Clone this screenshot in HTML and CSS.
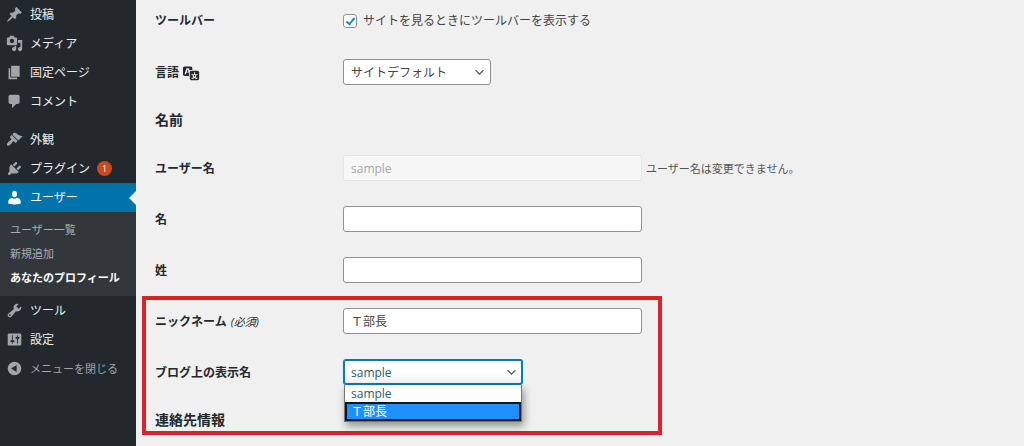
FILE: index.html
```html
<!DOCTYPE html>
<html lang="ja">
<head>
  <meta charset="UTF-8">
  <meta name="viewport" content="width=device-width, initial-scale=1.0">
  <title>プロフィール</title>
  <link rel="stylesheet" href="styles.css">
</head>
<body>

  <!-- Admin menu -->
  <nav class="admin-menu">
    <ul class="menu">
      <li><a class="menu-item" href="#">
        <svg class="icon" viewBox="0 0 20 20"><path d="M10.44 3.02l1.82-1.82 6.36 6.35-1.83 1.82c-1.05-.68-2.48-.57-3.41.36l-.75.75c-.92.93-1.04 2.35-.35 3.41l-1.83 1.82-2.41-2.41-2.8 2.79c-.42.42-3.38 2.71-3.8 2.29s1.86-3.39 2.28-3.81l2.79-2.79L4.1 9.36l1.83-1.82c1.05.69 2.48.57 3.4-.36l.75-.75c.93-.92 1.05-2.35.36-3.41z"/></svg>
        投稿</a></li>
      <li><a class="menu-item" href="#">
        <svg class="icon" viewBox="0 0 20 20"><path d="M13 11V4c0-.55-.45-1-1-1h-1.67L9 1H5L3.67 3H2c-.55 0-1 .45-1 1v7c0 .55.45 1 1 1h10c.55 0 1-.45 1-1zM7 4.5c1.38 0 2.5 1.12 2.5 2.5S8.38 9.5 7 9.5 4.5 8.38 4.5 7 5.62 4.5 7 4.5zM14 6h5v10.5c0 1.38-1.12 2.5-2.5 2.5S14 17.88 14 16.5s1.12-2.5 2.5-2.5c.17 0 .34.02.5.05V9h-3V6zm-4 8.05V13h2v3.5c0 1.38-1.12 2.5-2.5 2.5S7 17.88 7 16.5 8.12 14 9.5 14c.17 0 .34.02.5.05z"/></svg>
        メディア</a></li>
      <li><a class="menu-item" href="#">
        <svg class="icon" viewBox="0 0 20 20"><path d="M6 15V2h10v13H6zm-1 1h8v2H3V5h2v11z"/></svg>
        固定ページ</a></li>
      <li><a class="menu-item" href="#">
        <svg class="icon" viewBox="0 0 20 20"><path d="M5 2h9c1.1 0 2 .9 2 2v7c0 1.1-.9 2-2 2h-2l-5 5v-5H5c-1.1 0-2-.9-2-2V4c0-1.1.9-2 2-2z"/></svg>
        コメント</a></li>
      <li class="separator"></li>
      <li><a class="menu-item" href="#">
        <svg class="icon" viewBox="0 0 20 20"><path d="M14.48 11.06L7.41 3.99l1.5-1.5c.5-.56 2.3-.47 3.51.32 1.21.8 1.43 1.28 2.91 2.1 1.18.64 2.45 1.26 4.45.85zm-.71.71L6.7 4.7 4.93 6.47c-.39.39-.39 1.02 0 1.41l1.06 1.06c.39.39.39 1.03 0 1.42-.6.6-1.43 1.11-2.21 1.69-.35.26-.7.53-1.01.84C1.43 14.23.4 16.08 1.4 17.07c.99 1 2.84-.03 4.18-1.36.31-.31.58-.66.85-1.02.57-.78 1.08-1.61 1.69-2.21.39-.39 1.02-.39 1.41 0l1.06 1.06c.39.39 1.02.39 1.41 0z"/></svg>
        外観</a></li>
      <li><a class="menu-item" href="#">
        <svg class="icon" viewBox="0 0 20 20"><path d="M13.11 4.36L9.87 7.6 8 5.73l3.24-3.24c.35-.34 1.05-.2 1.56.32.52.51.66 1.21.31 1.55zm-8 1.77l.91-1.12 9.01 9.01-1.19.84c-.71.71-2.63 1.16-3.82 1.16H6.14L4.9 17.26c-.59.59-1.54.59-2.12 0-.59-.58-.59-1.53 0-2.12l1.24-1.24v-3.88c0-1.13.4-3.19 1.09-3.89zm7.26 3.97l3.24-3.24c.34-.35 1.04-.21 1.55.31.52.51.66 1.21.31 1.55l-3.24 3.25z"/></svg>
        プラグイン <span class="badge">1</span></a></li>
      <li>
        <a class="menu-item current" href="#">
          <svg class="icon" viewBox="0 0 20 20"><path d="M10 9.7c-2.3 0-3-2.1-3-3.9C7 3.700 8 2 10 2s3 1.700 3 3.800c0 1.800-.7 3.900-3 3.900zM7 10.300c.8.700 1.800 1.100 3 1.100s2.200-.4 3-1.100c2.500.2 4.300 2.200 4.300 4.400V17s-3.700 1.100-7.300 1.100S2.700 17 2.700 17v-2.300c0-2.200 1.800-4.200 4.300-4.400z"/></svg>
          ユーザー</a>
        <ul class="submenu">
          <li><a href="#">ユーザー一覧</a></li>
          <li><a href="#">新規追加</a></li>
          <li><a class="active" href="#">あなたのプロフィール</a></li>
        </ul>
      </li>
      <li><a class="menu-item" href="#">
        <svg class="icon" viewBox="0 0 20 20"><path d="M16.68 9.77c-1.34 1.34-3.3 1.67-4.95.99l-5.41 6.52c-.99.99-2.59.99-3.58 0s-.99-2.59 0-3.57l6.52-5.42c-.68-1.65-.35-3.61.99-4.95 1.28-1.28 3.12-1.62 4.72-1.06l-2.89 2.89 2.82 2.82 2.86-2.87c.53 1.58.18 3.39-1.08 4.65zM3.81 16.21c.4.39 1.04.39 1.43 0 .4-.4.4-1.04 0-1.43-.39-.4-1.03-.4-1.43 0-.39.39-.39 1.03 0 1.43z"/></svg>
        ツール</a></li>
      <li><a class="menu-item" href="#">
        <svg class="icon" viewBox="0 0 20 20"><path d="M18 16V4c0-.55-.45-1-1-1H3c-.55 0-1 .45-1 1v12c0 .55.45 1 1 1h14c.55 0 1-.45 1-1zM8 11h1c.55 0 1 .45 1 1s-.45 1-1 1H8v1.5c0 .28-.22.5-.5.5s-.5-.22-.5-.5V13H6c-.55 0-1-.45-1-1s.45-1 1-1h1V5.5c0-.28.22-.5.5-.5s.5.22.5.5V11zm5-2h-1c-.55 0-1-.45-1-1s.45-1 1-1h1V5.5c0-.28.22-.5.5-.5s.5.22.5.5V7h1c.55 0 1 .45 1 1s-.45 1-1 1h-1v5.5c0 .28-.22.5-.5.5s-.5-.22-.5-.5V9z"/></svg>
        設定</a></li>
      <li><button class="menu-item collapse" type="button">
        <svg class="icon" viewBox="0 0 20 20"><path fill-rule="evenodd" d="M10 2a8 8 0 1 1 0 16 8 8 0 0 1 0-16zm2.5 4L6 10l6.5 4z"/></svg>
        メニューを閉じる</button></li>
    </ul>
  </nav>

  <!-- Profile form -->
  <main class="content">
    <form class="profile-form">
      <div class="row">
        <span class="label">ツールバー</span>
        <div class="field">
          <input type="checkbox" id="toolbar" checked>
          <label for="toolbar">サイトを見るときにツールバーを表示する</label>
        </div>
      </div>
      <div class="row">
        <label class="label" for="locale">言語
          <svg class="icon" viewBox="0 0 20 20"><path d="M11 7H9.49c-.63 0-1.25.3-1.59.7L7 5H4.13l-2.39 7h1.69l.74-2H7v4H2c-1.1 0-2-.9-2-2V5c0-1.1.9-2 2-2h7c1.1 0 2 .9 2 2v2zM6.51 9H4.49l1-2.93zM10 8h7c1.1 0 2 .9 2 2v7c0 1.1-.9 2-2 2h-7c-1.1 0-2-.9-2-2v-7c0-1.1.9-2 2-2zm7.25 5v-1.08h-3.17V9.75h-1.16v2.17H9.75V13h1.28c.11.85.56 1.85 1.28 2.62-.87.36-1.89.62-2.31.62-.01.02.22.97.2 1.46.84 0 2.21-.5 3.28-1.15 1.09.65 2.48 1.15 3.34 1.15-.02-.49.2-1.44.2-1.46-.43 0-1.49-.27-2.38-.63.7-.77 1.14-1.77 1.25-2.61h1.36zm-3.81 1.93c-.5-.46-.85-1.13-1.01-1.93h2.09c-.17.8-.51 1.47-1 1.93l-.04.03s-.03-.02-.04-.03z"/></svg>
        </label>
        <div class="field">
          <div class="select-wrap">
            <select id="locale"><option>サイトデフォルト</option></select>
            <svg class="arrow" viewBox="0 0 20 20"><path d="M5 6l5 5 5-5 2 1-7 7-7-7z"/></svg>
          </div>
        </div>
      </div>

      <h2>名前</h2>

      <div class="row">
        <label class="label" for="username">ユーザー名</label>
        <div class="field">
          <input type="text" id="username" value="sample" disabled>
          <span class="description">ユーザー名は変更できません。</span>
        </div>
      </div>
      <div class="row">
        <label class="label" for="firstName">名</label>
        <div class="field"><input type="text" id="firstName"></div>
      </div>
      <div class="row">
        <label class="label" for="lastName">姓</label>
        <div class="field"><input type="text" id="lastName"></div>
      </div>

      <div class="highlighted">
        <div class="row">
          <label class="label" for="nickname">ニックネーム <span class="required">(必須)</span></label>
          <div class="field"><input type="text" id="nickname" value="Ｔ部長"></div>
        </div>
        <div class="row">
          <label class="label" for="displayName">ブログ上の表示名</label>
          <div class="field">
            <div class="select-wrap wide">
              <select id="displayName" class="focused">
                <option>sample</option>
                <option>Ｔ部長</option>
              </select>
              <svg class="arrow" viewBox="0 0 20 20"><path d="M5 6l5 5 5-5 2 1-7 7-7-7z"/></svg>
              <ul class="options" role="listbox" aria-label="ブログ上の表示名">
                <li role="option" aria-selected="false">sample</li>
                <li role="option" aria-selected="true" class="selected">Ｔ部長</li>
              </ul>
            </div>
          </div>
        </div>
        <h2>連絡先情報</h2>
      </div>
    </form>
  </main>

</body>
</html>
```
FILE: styles.css
```css
*,
*::before,
*::after {
  box-sizing: border-box;
}

body {
  display: flex;
  min-height: 100vh;
  margin: 0;
  background: #f0f0f0;
  color: #444;
  font-family: "Open Sans", "Noto Sans CJK JP", sans-serif;
  font-size: 12px;
  line-height: 17px;
}

ul {
  margin: 0;
  padding: 0;
  list-style: none;
}

/* Admin menu */
.admin-menu {
  flex: 0 0 136px;
  background: #23282d;
}

.menu-item {
  position: relative;
  display: flex;
  align-items: center;
  gap: 7px;
  width: 100%;
  height: 29px;
  padding: 0 6px;
  border: none;
  background: none;
  color: #eee;
  font: inherit;
  text-decoration: none;
}

.icon {
  flex: none;
  width: 17px;
  height: 17px;
  fill: currentColor;
}

.menu-item .icon {
  fill: #a0a5aa;
}

.separator {
  height: 9px;
}

.badge {
  width: 15px;
  height: 15px;
  border-radius: 50%;
  background: #ca4a1f;
  color: #fff;
  font-size: 9px;
  line-height: 15px;
  text-align: center;
}

.menu-item.current {
  background: #0073aa;
  color: #fff;
}

.menu-item.current .icon {
  fill: #fff;
}

.menu-item.current::after {
  content: "";
  position: absolute;
  top: 8px;
  right: 0;
  border: 7px solid transparent;
  border-right-color: #f0f0f0;
  border-left-width: 0;
}

.submenu {
  padding: 6px 0;
  background: #32373c;
  font-size: 11px;
}

.submenu a {
  display: block;
  padding: 0 10px;
  color: #a9adb1;
  line-height: 24px;
  text-decoration: none;
}

.submenu a.active {
  color: #fff;
  font-weight: bold;
}

.menu-item.collapse {
  color: #a0a5aa;
  font-size: 11px;
  cursor: pointer;
}

/* Profile form */
.content {
  flex: 1;
  padding: 8px 19px;
}

.profile-form,
.highlighted {
  display: flex;
  flex-direction: column;
  gap: 26px;
}

.row {
  display: grid;
  grid-template-columns: 188px 1fr;
  align-items: center;
  height: 25px;
}

.label {
  display: flex;
  align-items: center;
  gap: 4px;
  color: #23282d;
  font-weight: bold;
}

.required {
  font-size: 11px;
  font-style: italic;
  font-weight: normal;
}

.field {
  display: flex;
  align-items: center;
  gap: 4px;
}

h2 {
  margin: 0;
  color: #23282d;
  font-size: 14px;
  line-height: 19px;
}

input[type="text"],
select {
  height: 26px;
  margin: 0;
  padding: 0 7px;
  border: 1px solid #8d9297;
  border-radius: 3px;
  background: #fff;
  color: #444;
  font: inherit;
}

input[type="text"] {
  width: 299px;
}

input[type="text"]:disabled {
  border-color: #e4e5e6;
  background: #f7f7f7;
  color: #a8a8a8;
}

input[type="checkbox"] {
  position: relative;
  appearance: none;
  width: 14px;
  height: 14px;
  margin: 0 2px 0 0;
  border: 1px solid #8d9297;
  border-radius: 3px;
  background: #fff;
}

input[type="checkbox"]:checked::after {
  content: "";
  position: absolute;
  top: 1px;
  left: 4px;
  width: 5px;
  height: 9px;
  border: solid #1e8cbe;
  border-width: 0 2px 2px 0;
  transform: rotate(40deg);
}

.description {
  color: #555;
  font-size: 11px;
}

.select-wrap {
  position: relative;
  width: 148px;
}

.select-wrap.wide {
  width: 180px;
}

select {
  display: block;
  appearance: none;
  width: 100%;
}

select.focused {
  border: 2px solid #007cba;
  padding: 0 6px;
  background: linear-gradient(#fff 50%, #f1f1f1);
  color: #32586e;
}

.arrow {
  position: absolute;
  top: 7px;
  right: 5px;
  width: 13px;
  height: 13px;
  fill: #555;
  pointer-events: none;
}

.options {
  position: absolute;
  top: 100%;
  left: 1px;
  right: 1px;
  z-index: 1;
  border: 1px solid #777;
  border-top: none;
  background: #fff;
  color: #32586e;
  box-shadow: 2px 4px 8px rgba(0, 0, 0, 0.4);
}

.options li {
  padding: 0 6px;
}

.options .selected {
  padding: 0 4px;
  border: 2px solid #10151c;
  background: #1e90ff;
  color: #fff;
  line-height: 15px;
}

/* Red frame around the nickname fields */
.highlighted {
  position: relative;
}

.highlighted::before {
  content: "";
  position: absolute;
  top: -12px;
  left: -13px;
  width: 520px;
  bottom: -6px;
  border: 4px solid #da222a;
  pointer-events: none;
}
```
